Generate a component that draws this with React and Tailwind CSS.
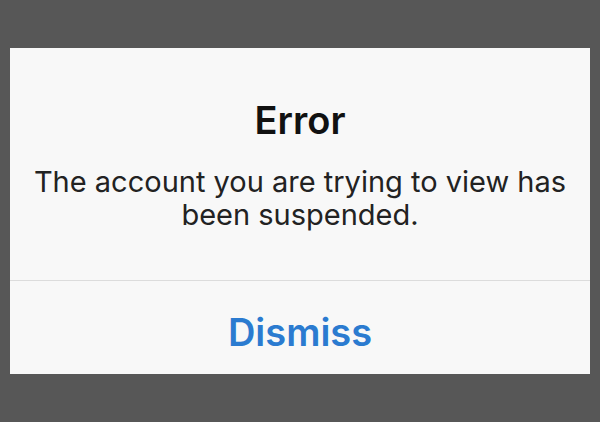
export default function App() {
  return (
    <div className="w-[600px] h-[422px] bg-[#575757] pt-[48px] px-[10px]" style={{ fontFamily: 'Inter, "Open Sans", sans-serif' }}>
      <div className="w-[580px] h-[326px] bg-[#f8f8f8] flex flex-col">
        <div className="h-[233px] border-b border-[#dcdcdc] flex flex-col items-center pt-[49px]">
          <div className="text-[38px] leading-[46px] font-semibold text-[#111]">Error</div>
          <div className="mt-[22px] text-[29px] leading-[33px] text-[#222] text-center">
            The account you are trying to view has<br />been suspended.
          </div>
        </div>
        <div className="flex-1 flex items-center justify-center pt-[9px]">
          <span className="text-[38px] leading-[46px] font-semibold text-[#2b7bd0]">Dismiss</span>
        </div>
      </div>
    </div>
  );
}
